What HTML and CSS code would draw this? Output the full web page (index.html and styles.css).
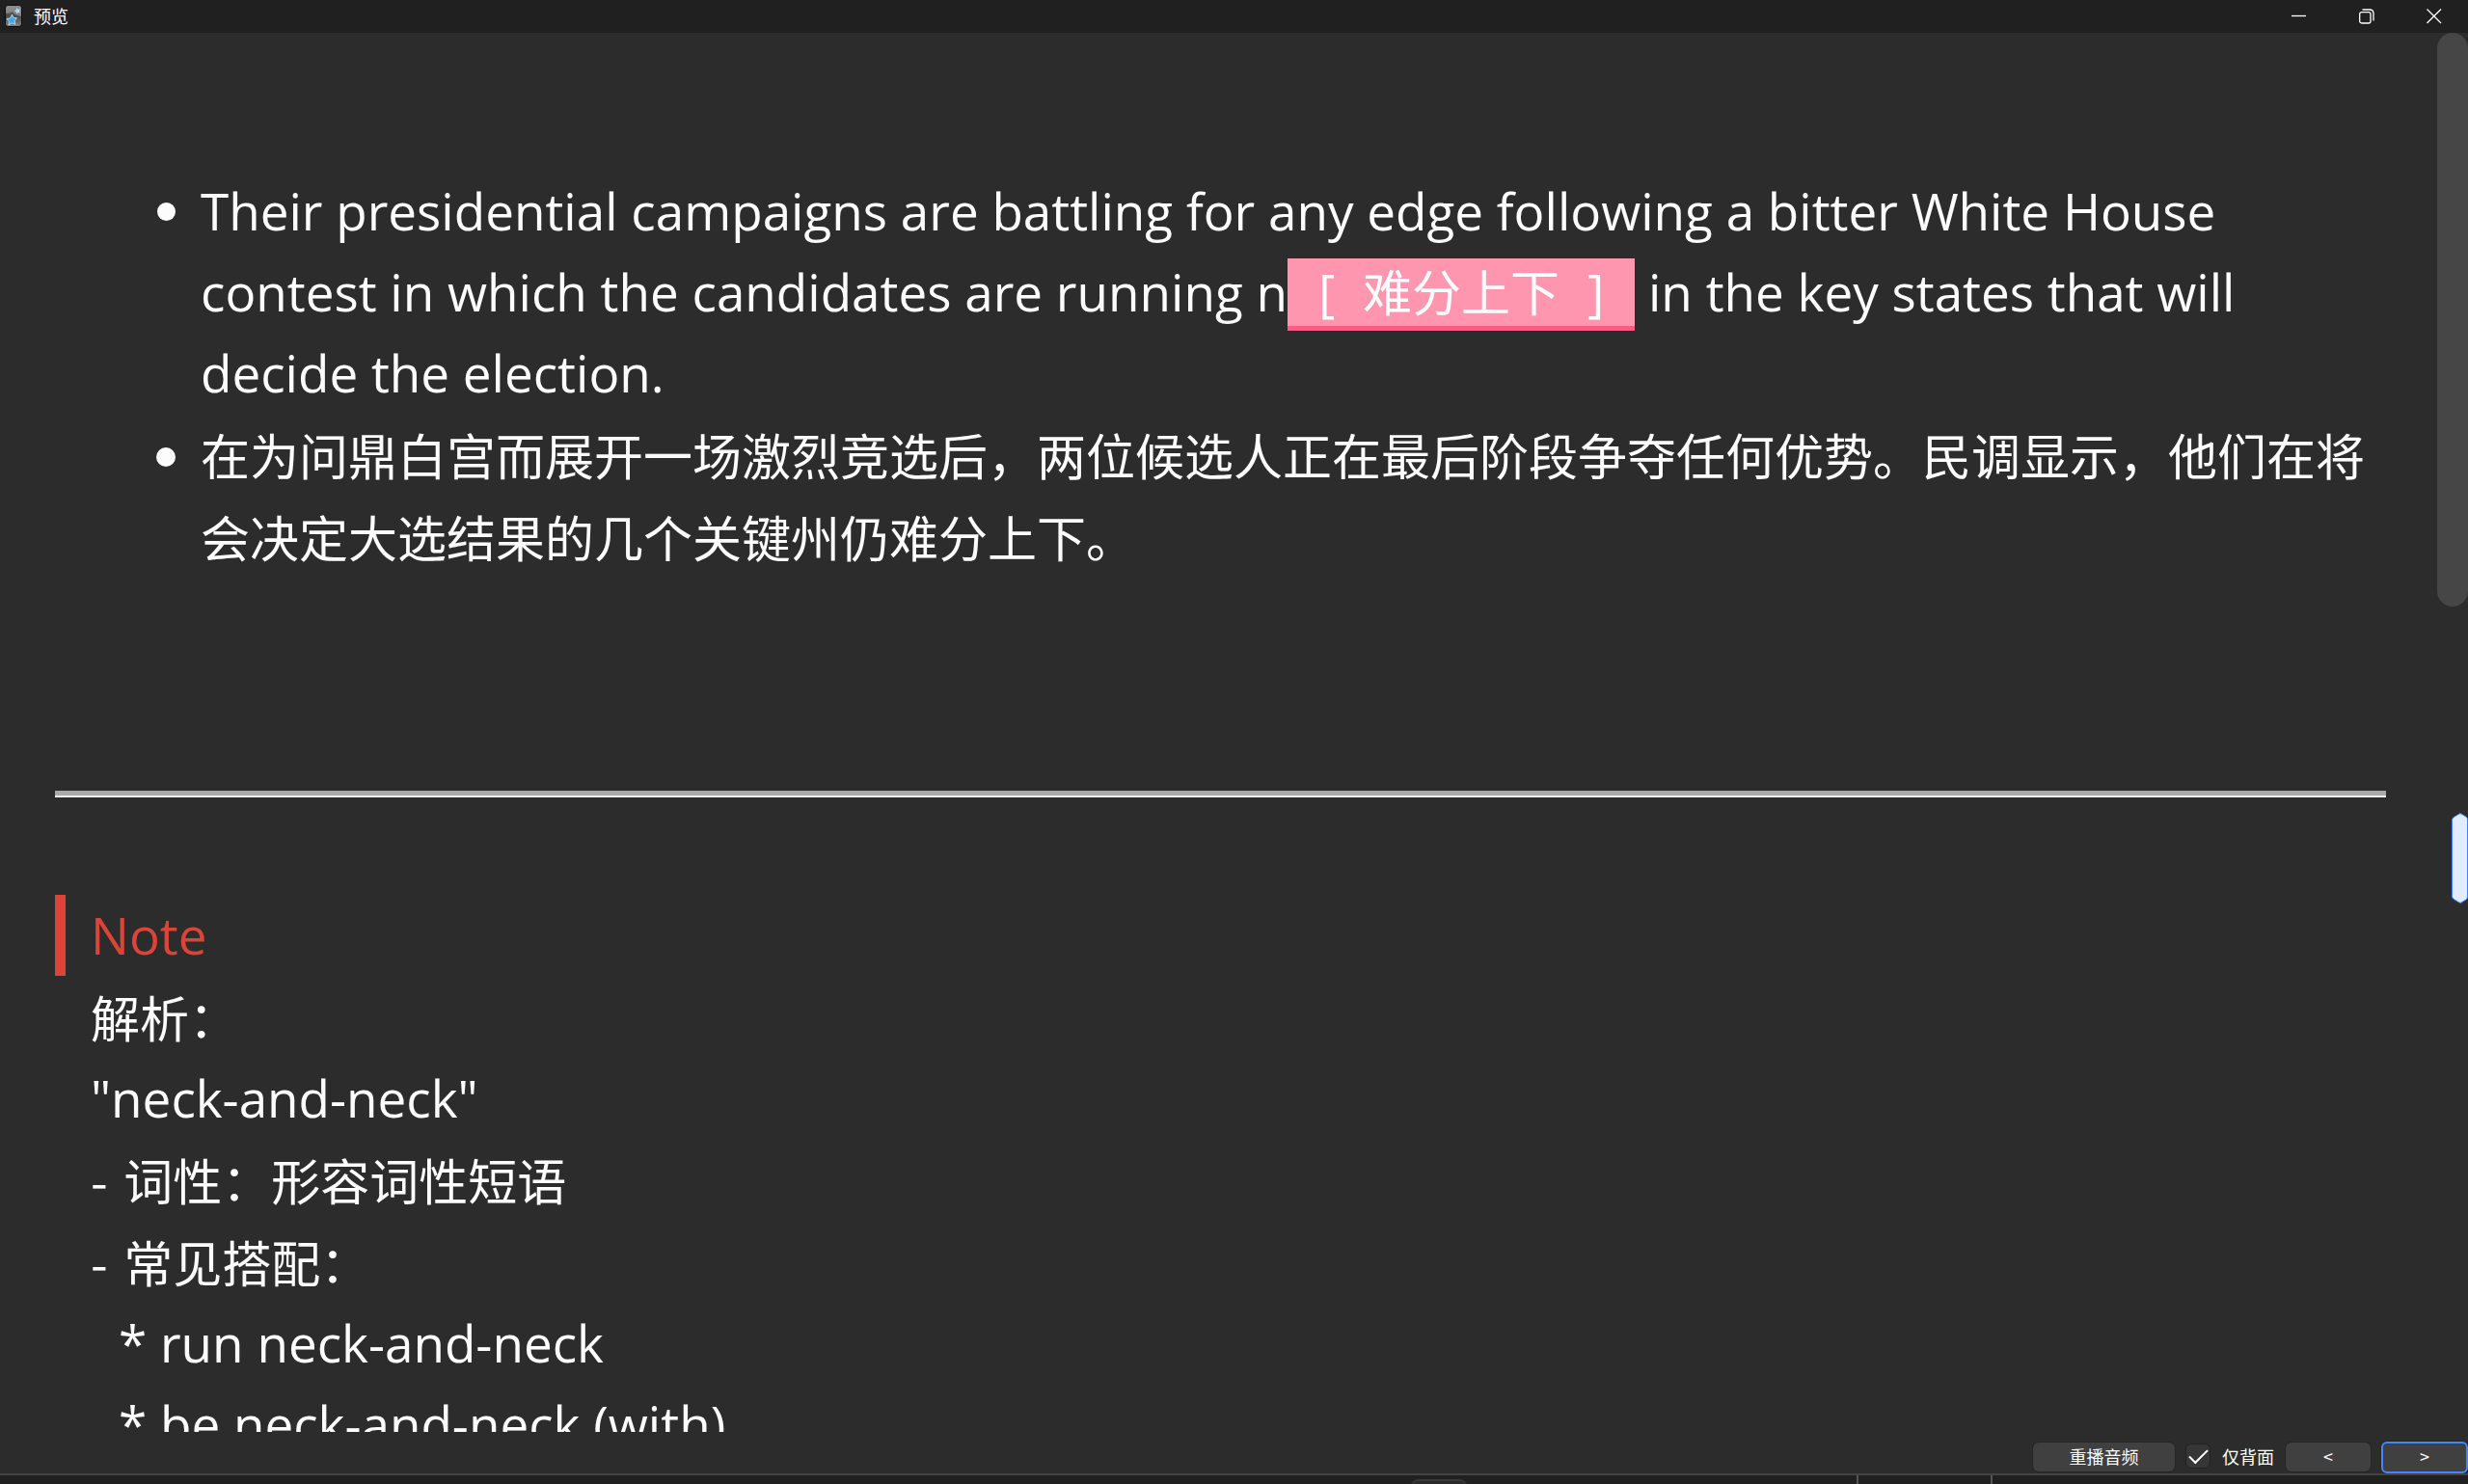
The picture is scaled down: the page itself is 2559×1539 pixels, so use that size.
FILE: index.html
```html
<!DOCTYPE html>
<html lang="zh-CN">
<head>
    <meta charset="UTF-8">
    <meta name="viewport" content="width=device-width, initial-scale=1.0">
    <title>预览</title>
    <link rel="stylesheet" href="styles.css">
</head>
<body>
    <header class="titlebar">
        <svg class="app-icon" width="18" height="24" viewBox="0 0 18 24">
            <defs>
                <linearGradient id="card" x1="0" y1="0" x2="0" y2="1">
                    <stop offset="0" stop-color="#7a7a7a"/>
                    <stop offset="0.5" stop-color="#4a4a4a"/>
                    <stop offset="1" stop-color="#858585"/>
                </linearGradient>
            </defs>
            <rect x="0.5" y="0.5" width="17" height="22" rx="3" fill="url(#card)" stroke="#0c0c0c"/>
            <path d="M1 4q0-3 3-3h10q3 0 3 3v8Q10 11 8 7 5 9 1 9z" fill="#999" opacity="0.7"/>
            <path d="M12.500 3l1.200 1.700 2.300-.2-1 2 .8 1.800-2-.3-1.600 1.300-.5-2-1.800-1 1.900-1z" fill="#a9dcfb"/>
            <path d="M7.500 10l1.300 3.200 3.700.5-2.300 2.800.6 3.800-3.500-1.400-3.300 2 .5-3.800-2.500-2.400 3.700-.9z" fill="#3fa6ee" stroke="#c4e6fb" stroke-width="0.8"/>
        </svg>
        <h1>预览</h1>
        <div class="window-buttons">
            <button aria-label="最小化">
                <svg width="16" height="16" viewBox="0 0 16 16"><path d="M0 7.500h15"/></svg>
            </button>
            <button aria-label="还原">
                <svg width="16" height="16" viewBox="0 0 16 16"><rect x="0.700" y="3.700" width="11.300" height="11.300" rx="2"/><path d="M3.500 1H11q4 0 4 4v7.500"/></svg>
            </button>
            <button aria-label="关闭">
                <svg width="16" height="16" viewBox="0 0 16 16"><path d="M.5 .5l14.500 14.500M15 .5L.5 15"/></svg>
            </button>
        </div>
    </header>

    <main class="card-view">
        <div class="card">
            <ul class="sentences">
                <li>Their presidential campaigns are battling for any edge following a bitter White House contest in which the candidates are running n<span class="cloze">[ <span>难分上下</span> ]</span> in the key states that will decide the election.</li>
                <li class="zh">在为问鼎白宫而展开一场激烈竞选后，两位候选人正在最后阶段争夺任何优势。民调显示，他们在将会决定大选结果的几个关键州仍难分上下。</li>
            </ul>
            <hr>
            <section class="note">
                <h2>Note</h2>
                <p class="zh">解析：</p>
                <p>"neck-and-neck"</p>
                <p class="zh"><span class="dash">-</span> 词性：形容词性短语</p>
                <p class="zh"><span class="dash">-</span> 常见搭配：</p>
                <p class="sub">* run neck-and-neck</p>
                <p class="sub">* be neck-and-neck (with)</p>
            </section>
        </div>
        <div class="scrollbar"><div class="thumb"></div></div>
        <svg class="edge-handle" width="17" height="94" viewBox="0 0 17 94">
            <path d="M.5 7Q1 5 3 4l5-3q1-.5 2 0l5 3q1.500 1 1.500 3v80q0 2-1.500 3l-5 3q-1 .5-2 0l-5-3Q1 89 .5 87z"/>
        </svg>
    </main>

    <footer class="toolbar">
        <button class="replay">重播音频</button>
        <input type="checkbox" id="back-only" checked>
        <label for="back-only">仅背面</label>
        <button class="prev">&lt;</button>
        <button class="next">&gt;</button>
    </footer>
    <div class="taskbar">
        <span class="task"></span>
        <span class="tick"></span>
        <span class="tick"></span>
    </div>
</body>
</html>
```
FILE: styles.css
```css
* {
    box-sizing: border-box;
}
body {
    margin: 0;
    height: 100vh;
    display: flex;
    flex-direction: column;
    overflow: hidden;
    background-color: #2c2c2c;
    color: #fcfcfc;
    font-family: "Open Sans", "Noto Sans CJK SC", sans-serif;
}
button {
    color: inherit;
    font: inherit;
    border: none;
    cursor: pointer;
}

/* title bar */
.titlebar {
    flex: none;
    display: flex;
    align-items: center;
    height: 34px;
    padding-left: 5px;
    background-color: #202020;
}
.titlebar h1 {
    margin: 0 auto 0 12px;
    padding-bottom: 2px;
    font-size: 18px;
    line-height: 32px;
    font-weight: 400;
    font-family: "Noto Sans CJK SC", sans-serif;
}
.window-buttons {
    display: flex;
}
.window-buttons button {
    width: 70px;
    height: 34px;
    padding: 0;
    background: none;
}
.window-buttons svg {
    display: block;
    margin: 0 auto 1px;
    fill: none;
    stroke: #fff;
    stroke-width: 1.3;
}

/* card */
.card-view {
    position: relative;
    flex: 1;
    min-height: 0;
    display: flex;
    overflow: hidden;
}
.card {
    flex: 1;
    padding: 143px 53px 0 57px;
    font-size: 53px;
    line-height: 84px;
}
.sentences {
    margin: 0;
    padding: 0 0 0 151px;
}
.zh {
    font-family: "Noto Sans CJK SC", sans-serif;
    font-size: 51px;
    line-height: 85px;
}
.cloze {
    display: inline-block;
    padding: 0 32px;
    line-height: 70px;
    background-color: #ff96b0;
    border-bottom: 5px solid #ff5c83;
}
.cloze span {
    margin: 0 15px;
    font-size: 51px;
}
hr {
    height: 7px;
    margin: 221px 0 101px;
    border: none;
    border-top: 5px solid #aaa;
    border-bottom: 2px solid #eee;
}
.note h2 {
    margin: 0;
    padding-left: 26px;
    border-left: 11px solid #db4437;
    color: #db4437;
    font-size: 53px;
    font-weight: 400;
}
.note p {
    margin: 0;
    padding-left: 37px;
}
.note .sub {
    padding-left: 66px;
}
.dash {
    margin-right: 5px;
}
.scrollbar {
    flex: none;
    width: 32px;
}
.thumb {
    height: 41%;
    border-radius: 16px;
    background-color: #464646;
}
.edge-handle {
    position: absolute;
    right: 0;
    top: 809px;
    fill: #e3ecff;
    stroke: #3f86ff;
}

/* bottom buttons */
.toolbar {
    flex: none;
    display: flex;
    align-items: center;
    justify-content: flex-end;
    height: 43px;
    padding-top: 9px;
    font-family: "Noto Sans CJK SC", sans-serif;
    font-size: 18px;
    line-height: 24px;
}
.toolbar button {
    height: 30px;
    padding: 0 0 2px;
    border-radius: 6px;
    background-color: #404040;
    box-shadow: 0 0 0 1px #262626;
}
.toolbar .replay {
    width: 147px;
}
.toolbar .prev {
    width: 88px;
    margin: 0 11px 0 12px;
}
.toolbar .next {
    width: 90px;
    height: 33px;
    border: 2px solid #3f86ff;
}
.toolbar label {
    padding-bottom: 2px;
}
.toolbar input {
    appearance: none;
    width: 26px;
    height: 26px;
    margin: 0 12px 2px 11px;
    border: 1px solid #222;
    border-radius: 6px;
    background-color: #363636;
}
.toolbar input:checked::before {
    content: "";
    display: block;
    width: 17px;
    height: 8px;
    margin: 5px 0 0 3px;
    border: solid #fff;
    border-width: 0 0 2px 2px;
    transform: rotate(-45deg);
}

/* strip of the desktop below the window */
.taskbar {
    flex: none;
    display: flex;
    height: 11px;
    border-top: 2px solid #444;
    background-color: #202020;
    overflow: hidden;
}
.task {
    width: 58px;
    height: 16px;
    margin: 4px 404px 0 1463px;
    border-top: 2px solid #3a3a3a;
    border-radius: 8px;
    background-color: #2a2a2a;
}
.tick {
    width: 2px;
    height: 9px;
    margin-right: 137px;
    background-color: #555;
}
```
